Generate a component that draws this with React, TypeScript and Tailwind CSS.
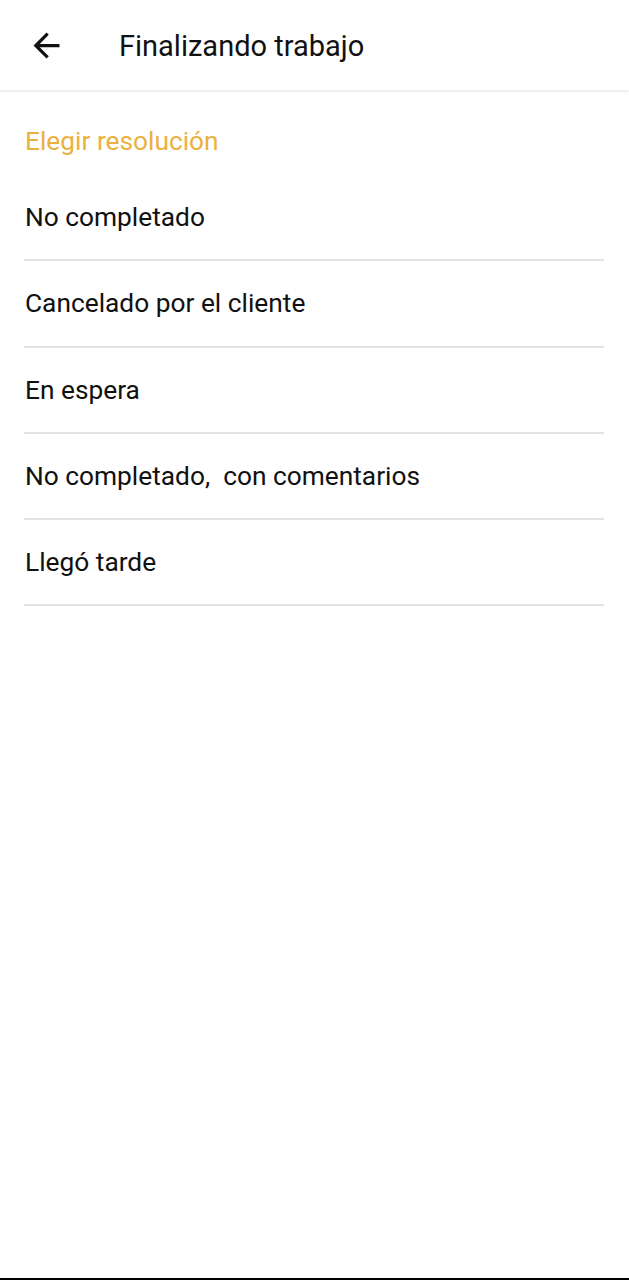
const OPTIONS = [
  'No completado',
  'Cancelado por el cliente',
  'En espera',
  'No completado,  con comentarios',
  'Llegó tarde',
];

function BackArrow() {
  return (
    <svg viewBox="0 0 24 24" className="h-[39px] w-[39px]" fill="#111">
      <path d="M20 11H7.83l5.59-5.59L12 4l-8 8 8 8 1.41-1.41L7.83 13H20v-2z" />
    </svg>
  );
}

export default function App() {
  return (
    <div className="flex h-[1280px] w-[629px] flex-col overflow-hidden border-b-2 border-black bg-white font-['Roboto',sans-serif] text-[#111]">
      <header className="relative z-10 flex h-[90px] shrink-0 items-center bg-white shadow-[0_1px_3px_rgba(0,0,0,0.12)]">
        <button type="button" className="ml-[27px] flex items-center justify-center">
          <BackArrow />
        </button>
        <h1 className="ml-[53px] whitespace-pre pt-[2px] text-[29px] leading-8">Finalizando trabajo</h1>
      </header>

      <main className="flex-1 pl-[24px] pr-[25px]">
        <p className="pl-px pt-[35px] pb-[18px] text-[26.3px] leading-8 text-[#ebb13f]">Elegir resolución</p>
        <ul>
          {OPTIONS.map((label) => (
            <li
              key={label}
              className="flex h-[86.3px] items-center whitespace-pre border-b-2 border-[#e3e3e3] pl-px text-[26.3px] leading-8"
            >
              {label}
            </li>
          ))}
        </ul>
      </main>
    </div>
  );
}
